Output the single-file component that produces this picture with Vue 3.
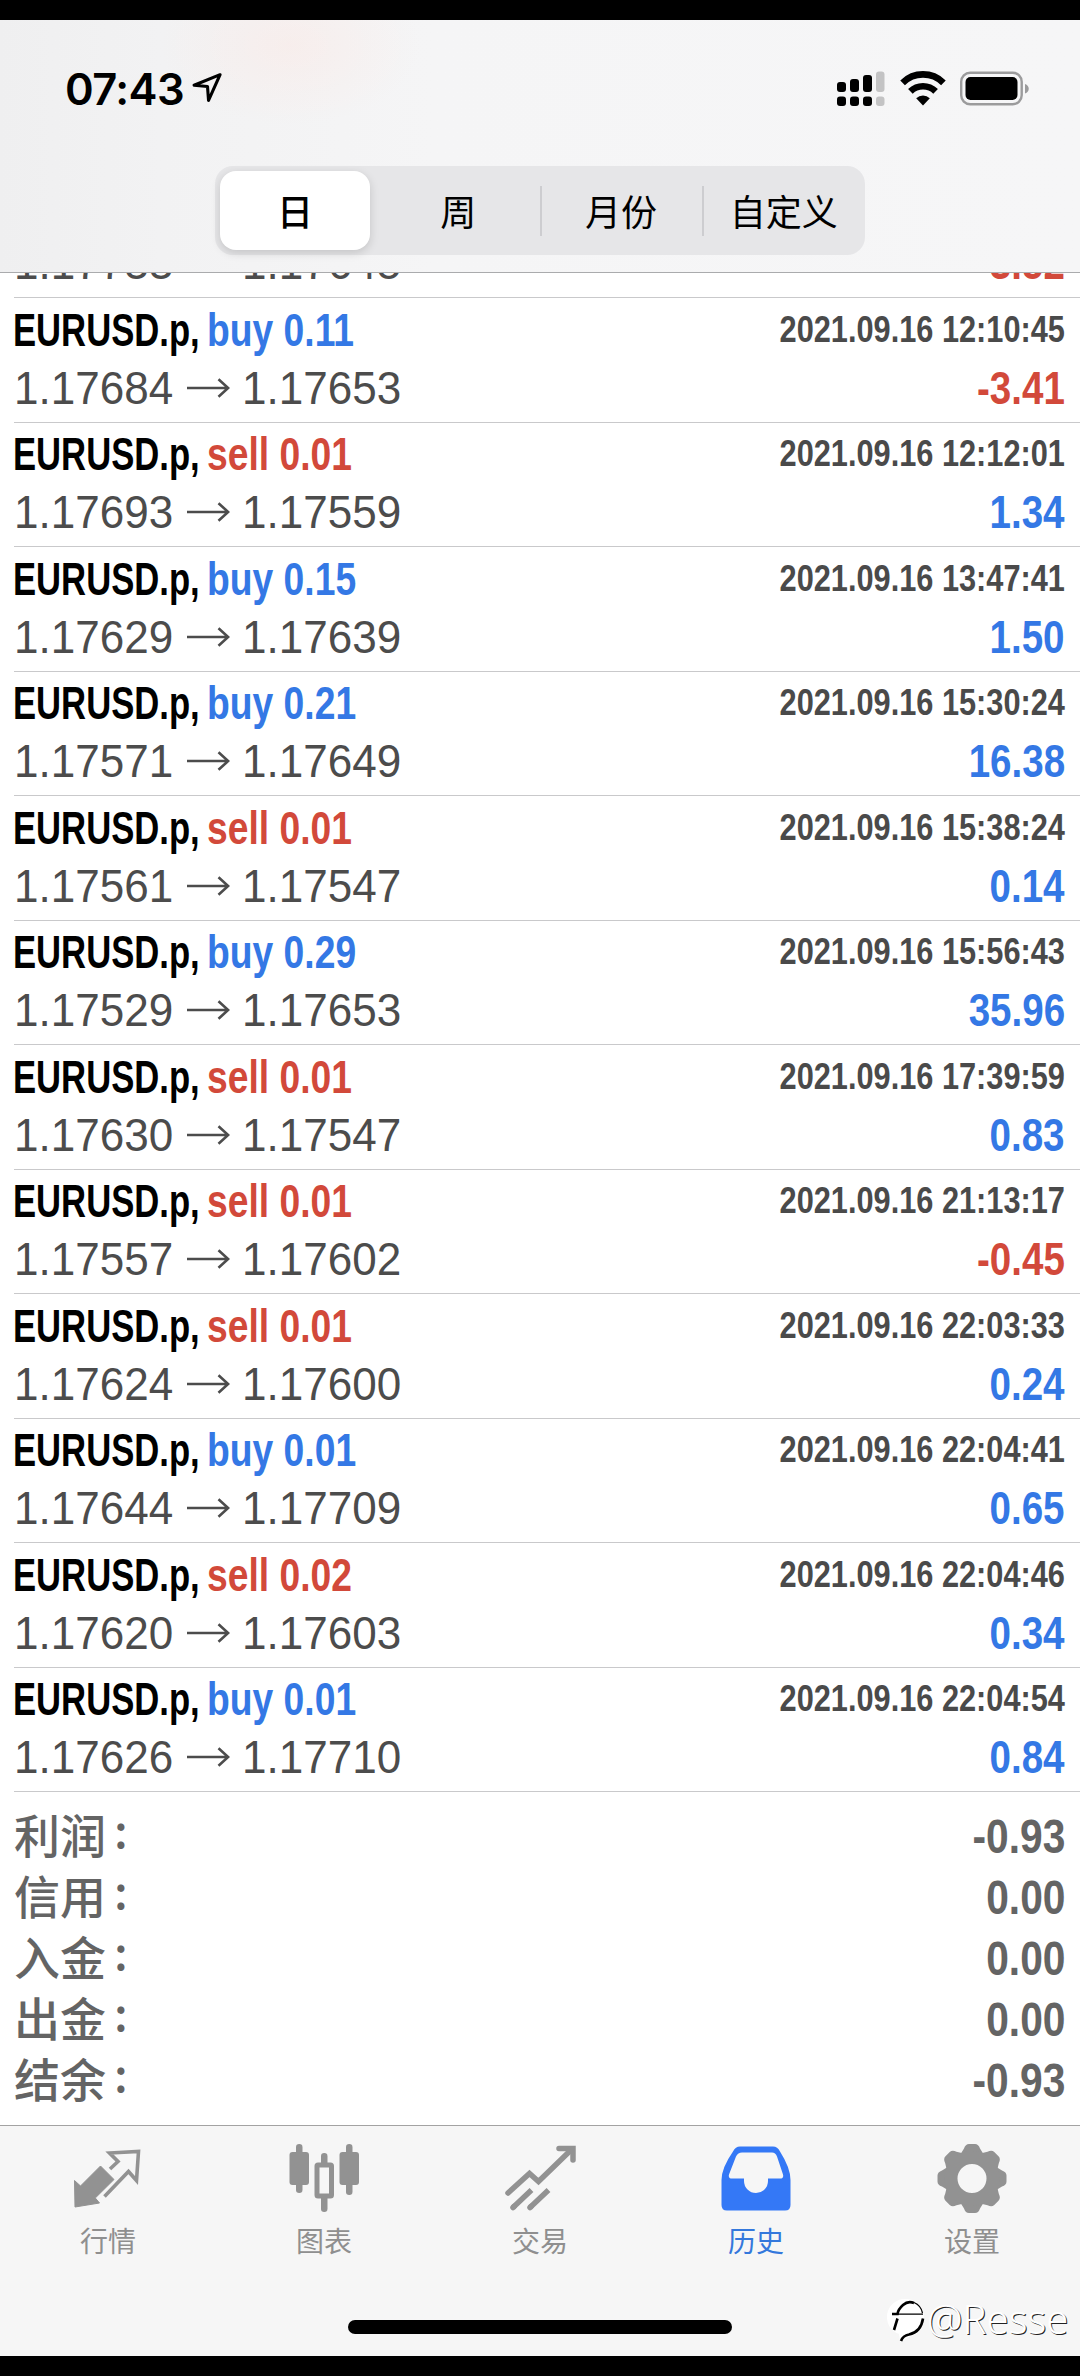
<script setup>
const rows = [
  ['buy', '0.11', '2021.09.16 12:10:45', '1.17684', '1.17653', '-3.41'],
  ['sell', '0.01', '2021.09.16 12:12:01', '1.17693', '1.17559', '1.34'],
  ['buy', '0.15', '2021.09.16 13:47:41', '1.17629', '1.17639', '1.50'],
  ['buy', '0.21', '2021.09.16 15:30:24', '1.17571', '1.17649', '16.38'],
  ['sell', '0.01', '2021.09.16 15:38:24', '1.17561', '1.17547', '0.14'],
  ['buy', '0.29', '2021.09.16 15:56:43', '1.17529', '1.17653', '35.96'],
  ['sell', '0.01', '2021.09.16 17:39:59', '1.17630', '1.17547', '0.83'],
  ['sell', '0.01', '2021.09.16 21:13:17', '1.17557', '1.17602', '-0.45'],
  ['sell', '0.01', '2021.09.16 22:03:33', '1.17624', '1.17600', '0.24'],
  ['buy', '0.01', '2021.09.16 22:04:41', '1.17644', '1.17709', '0.65'],
  ['sell', '0.02', '2021.09.16 22:04:46', '1.17620', '1.17603', '0.34'],
  ['buy', '0.01', '2021.09.16 22:04:54', '1.17626', '1.17710', '0.84'],
].map(([side, lots, time, open, close, profit]) => ({ side, lots, time, open, close, profit }))

// The list is scrolled, so only the tail of the previous deal shows under the header.
rows.unshift({ open: '1.17733', close: '1.17645', profit: '-3.52' })

const summary = [
  ['利润', '-0.93'],
  ['信用', '0.00'],
  ['入金', '0.00'],
  ['出金', '0.00'],
  ['结余', '-0.93'],
]
const periods = ['日', '周', '月份', '自定义']
const teeth = [0, 45, 90, 135, 180, 225, 270, 315]
</script>

<template>
  <div class="screen">
    <header class="header">
      <div class="status">
        <div class="clock">
          <span class="time">07:43</span>
          <svg class="location" width="31" height="32" viewBox="0 0 30 31">
            <path d="M27.2 2.6 2 12.8l13 1.2 1 13.6z" fill="none" stroke="#000" stroke-width="3" stroke-linejoin="round" />
          </svg>
        </div>
        <div class="indicators">
          <svg width="48" height="36" viewBox="0 0 48 36">
            <g fill="#000">
              <rect x="0" y="11" width="9" height="10" rx="3" /><rect x="13" y="8" width="9" height="13" rx="3" /><rect x="26" y="4" width="9" height="17" rx="3" />
              <rect x="0" y="25.500" width="9" height="9.500" rx="3" /><rect x="13" y="25.500" width="9" height="9.500" rx="3" /><rect x="26" y="25.500" width="9" height="9.500" rx="3" />
            </g>
            <g fill="#c3c3c4"><rect x="39" y="0.500" width="8.500" height="20.500" rx="3" /><rect x="39" y="25.500" width="8.500" height="9.500" rx="3" /></g>
          </svg>
          <svg class="wifi" width="46" height="36" viewBox="0 0 46 36">
            <g fill="none" stroke="#000" stroke-width="6.600">
              <path d="M2.600 11.800a29 29 0 0 1 40.800 0" /><path d="M10.400 20.400a18 18 0 0 1 25.200 0" />
            </g>
            <path d="M23 34.500l-6.800-7.300a10 10 0 0 1 13.600 0z" fill="#000" />
          </svg>
          <svg class="battery" width="70" height="36" viewBox="0 0 70 36">
            <rect x="1.200" y="1.700" width="60.500" height="31.600" rx="9" fill="none" stroke="#9b9b9c" stroke-width="2.400" />
            <rect x="5.500" y="6" width="52" height="23" rx="5" fill="#000" />
            <path d="M65 13c5 1.500 5 8 0 9.500z" fill="#9b9b9c" />
          </svg>
        </div>
      </div>
      <nav class="periods">
        <div v-for="(p, i) in periods" :key="p" class="period" :class="{ active: i === 0, divided: i > 1 }">{{ p }}</div>
      </nav>
    </header>

    <main class="list">
      <section class="rows">
        <article v-for="(r, i) in rows" :key="i" class="row">
          <div v-if="r.time" class="line">
            <div class="deal">
              <span class="symbol">EURUSD.p,</span>
              <span class="side" :class="r.side">{{ r.side }} {{ r.lots }}</span>
            </div>
            <span class="date">{{ r.time }}</span>
          </div>
          <div class="line">
            <div class="prices">
              <span class="price">{{ r.open }}</span>
              <svg class="arrow" width="43" height="20" viewBox="0 0 43 20">
                <path d="M0 10h41M31.500 1.200 41.200 10l-9.700 8.800" fill="none" stroke="#4c4c4c" stroke-width="2.600" />
              </svg>
              <span class="price">{{ r.close }}</span>
            </div>
            <span class="profit" :class="r.profit.startsWith('-') ? 'loss' : 'gain'">{{ r.profit }}</span>
          </div>
        </article>
      </section>
      <section class="summary">
        <div v-for="[label, value] in summary" :key="label" class="total">
          <span class="label">{{ label }}<span class="colon">:</span></span>
          <span class="amount">{{ value }}</span>
        </div>
      </section>
    </main>

    <footer class="footer">
      <nav class="tabs">
        <div class="tab">
          <svg width="72" height="72" viewBox="0 0 72 72">
            <path d="M2.500 36.500 8.500 42 28.500 22 42 35.500 23.300 54 27.500 59 3 63z" fill="#929292" stroke="#929292" stroke-width="1" stroke-linejoin="round" />
            <path d="M38 25l8-7.500-8.500-8.500L66.500 7.500l-2 29-8-9L32.500 52.500" fill="none" stroke="#929292" stroke-width="3.600" />
          </svg>
          <span>行情</span>
        </div>
        <div class="tab">
          <svg width="72" height="72" viewBox="0 0 72 72">
            <g fill="#929292">
              <rect x="1.500" y="8" width="19.500" height="33" rx="3" /><rect x="8" y="0" width="6.500" height="49" rx="3.200" />
              <rect x="51.500" y="8" width="19.500" height="33" rx="3" /><rect x="58" y="0" width="6.500" height="51" rx="3.200" />
              <rect x="33" y="9" width="6.500" height="14" rx="3.200" /><rect x="33" y="50" width="6.500" height="18" rx="3.200" />
            </g>
            <rect x="29" y="21" width="14.500" height="31" rx="1" fill="none" stroke="#929292" stroke-width="5" />
          </svg>
          <span>图表</span>
        </div>
        <div class="tab">
          <svg width="72" height="72" viewBox="0 0 72 72">
            <g fill="none" stroke="#929292" stroke-width="5.500">
              <path d="M4 49 25.500 29.500l9 8L67 6" stroke-linecap="round" /><path d="M55 4.500h14V16" stroke-linecap="round" />
              <path d="M27.500 46 9 63.500M44.500 46 26 63.500" /><path d="M10 62.500l-1 1M27 62.500l-1 1" stroke-linecap="round" />
            </g>
          </svg>
          <span>交易</span>
        </div>
        <div class="tab current">
          <svg width="72" height="72" viewBox="0 0 72 72">
            <path fill="#3478f6" fill-rule="evenodd" d="M13 7.500Q15.500 2.500 20 2.500H53Q57.500 2.500 60 7.500 70.500 24 70.500 36V61Q70.500 66.500 65 66.500H7Q1.500 66.500 1.500 61V36Q1.500 24 13 7.500ZM22 8.500Q18 8.500 16 12.500L9 30.500Q8 34.500 12 34.500H24V37A12 12 0 0 0 48 37V34.500H60Q64 34.500 63 30.500L57 12.500Q55.500 8.500 52 8.500Z" />
          </svg>
          <span>历史</span>
        </div>
        <div class="tab">
          <svg width="72" height="72" viewBox="0 0 72 72">
            <g fill="#929292">
              <path v-for="a in teeth" :key="a" :transform="`rotate(${a} 36 34.500)`" d="M24 11l4-6.500Q29.500 0 33 0h6q3.500 0 5 4.500L48 11z" />
            </g>
            <circle cx="36" cy="34.500" r="21" fill="none" stroke="#929292" stroke-width="13" />
          </svg>
          <span>设置</span>
        </div>
      </nav>
      <div class="home" />
      <div class="watermark">
        <svg width="38" height="46" viewBox="0 0 38 46">
          <path d="M18 0A18 18 0 0 1 37 18Q37 34 24 37L13 43 12 35A18 18 0 0 1 18 0Z" fill="#fff" />
          <g fill="none" stroke="#000">
            <path d="M27 4Q21 1.500 16 6T10.500 15H5M10.500 19.500 7 31M36 19.500Q34 33 22 35.500 16 36.500 14 42" stroke-width="2.600" />
            <path d="M10 15.200h26M27 3.500Q34 6.500 35.500 14" stroke-width="1.300" />
          </g>
        </svg>
        <span>@Resse</span>
      </div>
    </footer>
  </div>
</template>

<style>
html,
body {
  background: #000;
}
</style>

<style scoped>
.screen {
  width: 1080px;
  height: 2376px;
  box-sizing: border-box;
  padding: 20px 0;
  background: #000;
  display: flex;
  flex-direction: column;
  overflow: hidden;
  font-family: 'Liberation Sans', 'Noto Sans CJK SC', sans-serif;
  white-space: nowrap;
}
.header {
  height: 253px;
  box-sizing: border-box;
  flex: none;
  border-bottom: 1.5px solid #aaabad;
  background:
    radial-gradient(ellipse 130px 80px at 290px 25px, rgba(255, 225, 218, 0.32), rgba(255, 225, 218, 0)),
    linear-gradient(90deg, #efeff0 0, #f2f2f3 15%, #f5f5f6 40%, #f6f6f7 100%);
}
.status {
  height: 146px;
  display: flex;
  justify-content: space-between;
  padding: 0 50px 0 65px;
  box-sizing: border-box;
}
.clock {
  display: flex;
  align-items: flex-start;
}
.time {
  margin-top: 43px;
  width: 127px;
  font: 600 43.5px/52px Inter, sans-serif;
  letter-spacing: -0.6px;
}
.location {
  margin-top: 52px;
}
.indicators {
  display: flex;
  padding-top: 51px;
  align-items: flex-start;
}
.wifi {
  margin-left: 15px;
}
.battery {
  margin-left: 14px;
}
.periods {
  width: 650px;
  height: 89px;
  margin: 0 auto;
  border-radius: 18px;
  background: #e6e6e8;
  display: flex;
  padding: 5px 0 5px 5px;
  box-sizing: border-box;
}
.period {
  flex: 1;
  display: flex;
  align-items: center;
  justify-content: center;
  font: 36px/1 'Noto Sans CJK SC', sans-serif;
  padding-bottom: 2px;
}
.active {
  flex: 0 0 150px;
  margin-right: 7px;
  background: #fff;
  border-radius: 16px;
  box-shadow: 0 3px 10px rgba(0, 0, 0, 0.15);
  font-weight: 500;
}
.divided {
  background: linear-gradient(#cdcdd0, #cdcdd0) 0 50% / 2px 50px no-repeat;
}
.list {
  flex: 1;
  min-height: 0;
  overflow: hidden;
  background: #fff;
}
.rows {
  margin-top: -99.5px;
  padding-left: 14px;
}
.row {
  height: 124.5px;
  box-sizing: border-box;
  border-bottom: 1.5px solid #c9c9cb;
  padding: 0 15px 5px 0;
  display: flex;
  flex-direction: column;
  justify-content: flex-end;
}
.line {
  height: 58px;
  flex: none;
  display: flex;
  justify-content: space-between;
  align-items: center;
  font-size: 46px;
  line-height: 58px;
}
.deal,
.prices {
  display: flex;
  align-items: center;
}
.symbol,
.side,
.date,
.profit,
.amount {
  font-weight: 700;
}
.symbol {
  width: 194px;
  margin-left: -1.5px;
  transform: scaleX(0.753);
  transform-origin: 0 50%;
}
.side {
  transform: scaleX(0.81);
  transform-origin: 0 50%;
}
.buy,
.gain {
  color: #3478e5;
}
.sell,
.loss {
  color: #d2493a;
}
.date {
  font-size: 36.5px;
  color: #4a4a4a;
  transform: scaleX(0.842);
  transform-origin: 100% 50%;
}
.prices {
  color: #4c4c4c;
}
.price {
  width: 159px;
  transform: scaleX(0.957);
  transform-origin: 0 50%;
}
.arrow {
  margin: 0 12px 0 14px;
}
.profit {
  transform: scaleX(0.838);
  transform-origin: 100% 50%;
}
.summary {
  padding: 14px 15px 0;
  color: #646464;
}
.total {
  height: 61px;
  display: flex;
  justify-content: space-between;
  line-height: 61px;
}
.label {
  margin: -3px 0 0 -1px;
  font-family: 'Noto Sans CJK SC', sans-serif;
  font-weight: 500;
  font-size: 46px;
}
.colon {
  display: inline-block;
  margin-left: 8px;
  transform: translateY(-5px);
}
.amount {
  font-size: 47.5px;
  transform: scaleX(0.857);
  transform-origin: 100% 50%;
}
.footer {
  flex: none;
  height: 231px;
  border-top: 1.5px solid #a3a3a3;
  box-sizing: border-box;
  background: #f6f6f6;
  position: relative;
}
.tabs {
  display: flex;
  padding-top: 18px;
}
.tab {
  flex: 1;
  display: flex;
  flex-direction: column;
  align-items: center;
  color: #8f8f8f;
  font: 28px/40px 'Noto Sans CJK SC', sans-serif;
}
.tab span {
  margin-top: 3.5px;
}
.current {
  color: #3478dc;
}
.home {
  width: 384px;
  height: 14px;
  border-radius: 7px;
  background: #000;
  margin: 60px auto 0;
}
.watermark {
  position: absolute;
  left: 887px;
  top: 173px;
  display: flex;
  color: #fff;
  font: 300 40px/40px 'Noto Sans', sans-serif;
  text-shadow: 1px 1px 0 #222;
}
.watermark span {
  margin-left: 2px;
}
</style>
